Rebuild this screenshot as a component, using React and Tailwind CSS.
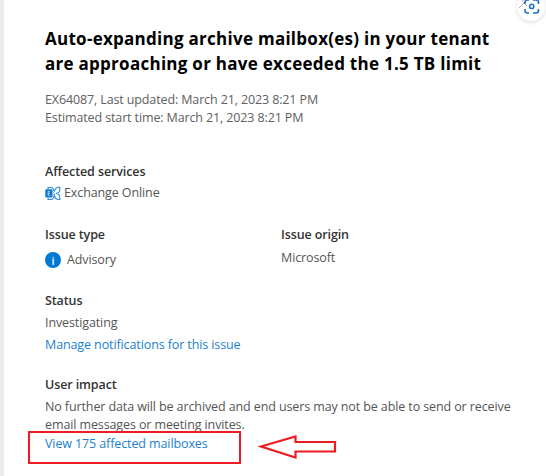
const TEXT = "whitespace-nowrap";

function Heading({ children, className = "" }) {
  return (
    <h2 className={`${TEXT} text-[12.5px] leading-[22px] font-semibold text-[#333333] ${className}`}>
      {children}
    </h2>
  );
}

function ExchangeIcon() {
  return (
    <svg width="16" height="15" viewBox="0 0 16 15" fill="none" className="shrink-0">
      <path
        d="M3 3V1.500h3.500Q8.500 2 9.300 5.500 10.500 1.200 13.500 1.200h1.300V4q0 3-3.800 3.500 3.800.5 3.800 3.500v2.500h-1.300Q10.500 13.500 9.300 9.500 8.500 13 6.500 13.500H3V12"
        stroke="#2b88d8"
        strokeWidth="1.1"
      />
      <path d="M7.500 5.500l2 2-2 2" stroke="#69afe5" strokeWidth="0.9" />
      <rect x="0.300" y="3.200" width="7.200" height="8.300" rx="0.7" fill="#0f78d4" />
      <path d="M5 5.400H3.200v3.900H5M3.200 7.300h1.700" stroke="#c4e0f5" strokeWidth="0.9" />
    </svg>
  );
}

function CaptureButton() {
  return (
    <button className="absolute top-[-7px] left-[513px] h-7 w-7 rounded-full bg-white shadow-[0_1px_4px_rgba(0,0,0,0.15)]">
      <svg width="28" height="28" viewBox="0 0 28 28" fill="none" className="absolute inset-0">
        <path d="M2 15l8-8M4 6l6 7" stroke="#b9a7a7" strokeWidth="1" />
        <g stroke="#2470c2" strokeWidth="1.6">
          <path d="M8 11V9.500q0-2.500 2.500-2.500H12M16 7h3q2.500 0 2.500 2.500V11M21.500 16v1.500q0 2.500-2.500 2.500h-3M12 20h-1.500Q8 20 8 17.500V16" />
          <circle cx="14.700" cy="13.400" r="2.100" />
        </g>
      </svg>
    </button>
  );
}

export default function App() {
  return (
    <main className="relative h-[476px] w-[546px] overflow-hidden border-l-4 border-[#ececec] bg-white pt-[26px] pl-[41px] font-['Open_Sans','Noto_Sans',sans-serif] text-[12.5px] tracking-[-0.108px] text-[#555555]">
      <h1 className="text-[17px] leading-[25px] font-bold tracking-[0.27px] whitespace-nowrap text-black">
        Auto-expanding archive mailbox(es) in your tenant
        <br />
        are approaching or have exceeded the 1.5 TB limit
      </h1>
      <div className="mt-[15px] text-[12.5px] leading-[18px] tracking-[-0.125px] whitespace-nowrap text-[#606060]">
        <p>EX64087, Last updated: March 21, 2023 8:21 PM</p>
        <p>Estimated start time: March 21, 2023 8:21 PM</p>
      </div>
      <section className="mt-[34px]">
        <Heading>Affected services</Heading>
        <div className="mt-[-1px] flex h-[22px] items-center gap-[3px]">
          <ExchangeIcon />
          <span className={TEXT}>Exchange Online</span>
        </div>
      </section>
      <div className="mt-[20px] flex">
        <section className="w-[236px]">
          <Heading>Issue type</Heading>
          <div className="mt-[3px] flex h-[22px] items-center gap-[6px]">
            <span className="flex h-4 w-4 items-center justify-center rounded-full bg-[#0078d4] text-[11px] leading-none font-semibold text-white">
              i
            </span>
            <span className={TEXT}>Advisory</span>
          </div>
        </section>
        <section>
          <Heading>Issue origin</Heading>
          <p className="leading-[24px]">Microsoft</p>
        </section>
      </div>
      <section className="mt-[19px] leading-[22px]">
        <Heading>Status</Heading>
        <p>Investigating</p>
        <a className="block whitespace-nowrap text-[#1a7fd0]">Manage notifications for this issue</a>
      </section>
      <section className="mt-[19px]">
        <Heading className="mt-[-1px]">User impact</Heading>
        <div className="leading-[18px] whitespace-nowrap">
          <p className="mt-[2px]">No further data will be archived and end users may not be able to send or receive</p>
          <p>email messages or meeting invites.</p>
          <a className="mt-[1px] block text-[#1a7fd0]">View 175 affected mailboxes</a>
        </div>
      </section>
      <div className="absolute top-[431px] left-[24px] h-[33px] w-[213px] border-2 border-[#ed1c24]" />
      <svg width="80" height="26" viewBox="0 0 80 26" fill="none" className="absolute top-[434px] left-[254px]">
        <path d="M3 12.500L37.500 2.500V8H77V17.500H37.500V23.500Z" stroke="#ed1c24" strokeWidth="2.200" />
      </svg>
      <CaptureButton />
    </main>
  );
}
